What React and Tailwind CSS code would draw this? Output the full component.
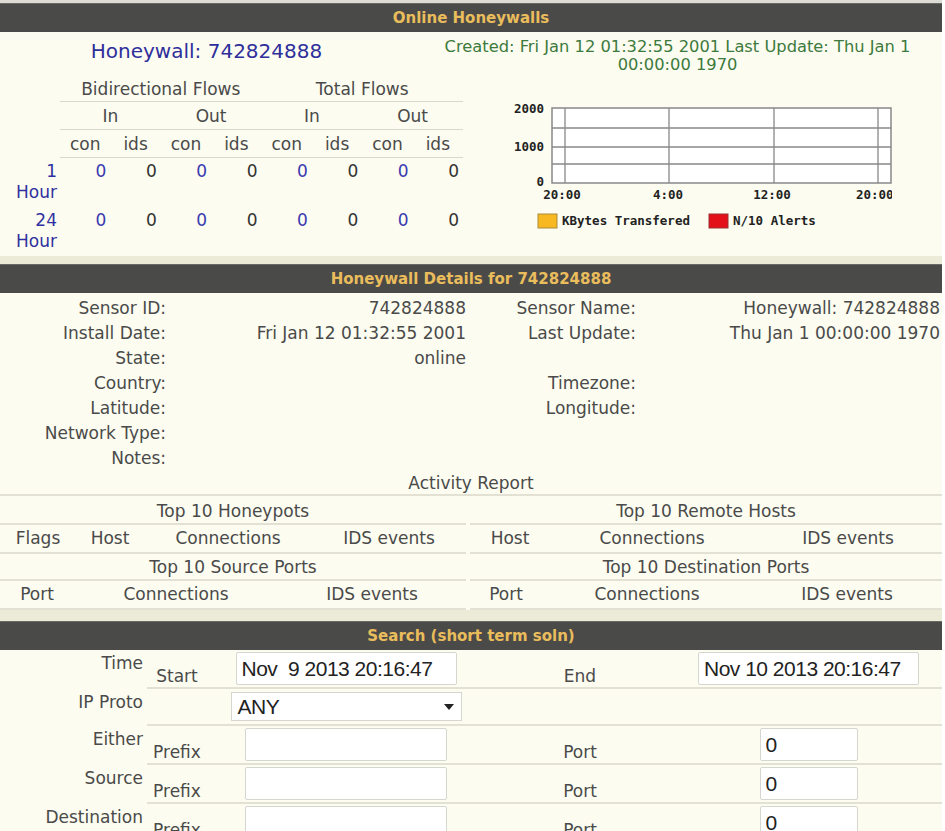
import React from "react";

const font = { fontFamily: '"DejaVu Sans", Verdana, sans-serif' };

function Bar({ title }) {
  return (
    <div className="h-[29px] bg-[#4a4a48] border-t border-[#6a6a66] flex items-center justify-center text-[15px] font-bold text-[#eabd5c]">
      {title}
    </div>
  );
}

function Band({ h = "h-[8px]" }) {
  return <div className={`${h} bg-[#ecebd7]`} />;
}

function Chart() {
  const mono = { fontFamily: '"DejaVu Sans Mono", monospace', fontWeight: 700, fontSize: 12.5 };
  return (
    <svg width="387" height="135" className="block">
      <rect x="47" y="7" width="339" height="75" fill="#fff" stroke="#888" strokeWidth="1.5" />
      {[27, 46, 63].map((y) => (
        <line key={y} x1="47" x2="386" y1={y} y2={y} stroke="#888" strokeWidth="1.3" />
      ))}
      {[60, 164, 269, 373].map((x) => (
        <line key={x} x1={x} x2={x} y1="7" y2="82" stroke="#888" strokeWidth="1.3" />
      ))}
      <g style={mono} fill="#222">
        <text x="39" y="12" textAnchor="end">2000</text>
        <text x="39" y="50" textAnchor="end">1000</text>
        <text x="39" y="85" textAnchor="end">0</text>
        <text x="57" y="98" textAnchor="middle">20:00</text>
        <text x="163" y="98" textAnchor="middle">4:00</text>
        <text x="267" y="98" textAnchor="middle">12:00</text>
        <text x="351" y="98">20:00</text>
        <rect x="33" y="113" width="19" height="14" fill="#f7b821" stroke="#a98a3a" />
        <text x="57" y="124">KBytes Transfered</text>
        <rect x="204" y="113" width="19" height="14" fill="#e3101a" stroke="#9a3030" />
        <text x="228" y="124">N/10 Alerts</text>
      </g>
    </svg>
  );
}

function FlowsTable() {
  const line = "border-b border-[#d9d8cc]";
  const rows = [
    ["1", "Hour"],
    ["24", "Hour"],
  ];
  return (
    <div className="w-[463px] grid grid-cols-[60px_repeat(8,1fr)]">
      <div />
      <div className={`col-span-4 text-center h-[26px] leading-[26px] ${line}`}>Bidirectional Flows</div>
      <div className={`col-span-4 text-center h-[26px] leading-[26px] ${line}`}>Total Flows</div>
      <div />
      {["In", "Out", "In", "Out"].map((t, i) => (
        <div key={i} className={`col-span-2 text-center h-[27px] leading-[27px] ${line}`}>{t}</div>
      ))}
      <div />
      {["con", "ids", "con", "ids", "con", "ids", "con", "ids"].map((t, i) => (
        <div key={i} className={`text-center h-[27px] leading-[27px] ${line}`}>{t}</div>
      ))}
      {rows.map((r, ri) => (
        <React.Fragment key={ri}>
          <div className="text-right pr-[3px] py-[3px] leading-[21px] text-[#3030a0]">
            {r[0]}
            <br />
            {r[1]}
          </div>
          {Array.from({ length: 8 }).map((_, i) => (
            <div
              key={i}
              className={`text-right pr-[4px] py-[3px] leading-[21px] ${i % 2 === 0 ? "text-[#3a3ab0]" : "text-[#333]"}`}
            >
              0
            </div>
          ))}
        </React.Fragment>
      ))}
    </div>
  );
}

function Details() {
  const left = [
    ["Sensor ID:", "742824888", "Sensor Name:", "Honeywall: 742824888"],
    ["Install Date:", "Fri Jan 12 01:32:55 2001", "Last Update:", "Thu Jan 1 00:00:00 1970"],
    ["State:", "online", "", ""],
    ["Country:", "", "Timezone:", ""],
    ["Latitude:", "", "Longitude:", ""],
    ["Network Type:", "", "", ""],
    ["Notes:", "", "", ""],
  ];
  return (
    <div className="pt-[3px]">
      <div className="grid grid-cols-[170px_300px_170px_1fr]">
        {left.map((r, i) => (
          <React.Fragment key={i}>
            <div className="h-[25px] leading-[25px] text-right pr-[4px]">{r[0]}</div>
            <div className="h-[25px] leading-[25px] text-right pr-[4px] whitespace-nowrap">{r[1]}</div>
            <div className="h-[25px] leading-[25px] text-right pr-[4px]">{r[2]}</div>
            <div className="h-[25px] leading-[25px] text-right pr-[2px] whitespace-nowrap">{r[3]}</div>
          </React.Fragment>
        ))}
      </div>
      <div className="h-[25px] leading-[25px] text-center border-b-2 border-[#e2e1d4]">Activity Report</div>
    </div>
  );
}

function TopTable({ title, cols, widths }) {
  return (
    <div>
      <div className="h-[27px] leading-[27px] text-center border-b-2 border-[#e2e1d4]">{title}</div>
      <div className={`grid ${widths} border-b-2 border-[#e2e1d4]`}>
        {cols.map((c) => (
          <div key={c} className="h-[27px] leading-[27px] text-center">{c}</div>
        ))}
      </div>
    </div>
  );
}

function Activity() {
  return (
    <div className="pt-[2px] flex justify-between">
      <div className="w-[466px]">
        <TopTable
          title="Top 10 Honeypots"
          cols={["Flags", "Host", "Connections", "IDS events"]}
          widths="grid-cols-[76px_68px_168px_1fr]"
        />
        <TopTable
          title="Top 10 Source Ports"
          cols={["Port", "Connections", "IDS events"]}
          widths="grid-cols-[74px_204px_1fr]"
        />
      </div>
      <div className="w-[472px]">
        <TopTable
          title="Top 10 Remote Hosts"
          cols={["Host", "Connections", "IDS events"]}
          widths="grid-cols-[80px_204px_1fr]"
        />
        <TopTable
          title="Top 10 Destination Ports"
          cols={["Port", "Connections", "IDS events"]}
          widths="grid-cols-[72px_210px_1fr]"
        />
      </div>
    </div>
  );
}

const inputFont = { fontFamily: '"Liberation Sans", Arial, sans-serif' };

function Field({ value, w, h = "h-[33px]" }) {
  return (
    <div
      className={`${w} ${h} bg-white border border-[#d6d6d0] rounded-[2px] flex items-center px-[5px] text-[21px] tracking-[-0.5px] text-[#222] whitespace-pre`}
      style={inputFont}
    >
      {value}
    </div>
  );
}

function SearchRow({ label, sub, mid, right, midSub, h }) {
  const cell = "border-b-2 border-[#e2e1d4]";
  return (
    <div className={`grid grid-cols-[147px_60px_278px_190px_1fr] ${h}`}>
      <div className="text-right pr-[4px] pt-[3px] leading-[20px]">{label}</div>
      <div className={`${cell} flex items-end justify-center pb-[1px] leading-[20px]`}>{sub}</div>
      <div className={`${cell} flex items-center justify-center`}>{mid}</div>
      <div className={`${cell} flex items-end justify-center pb-[1px] leading-[20px]`}>{midSub}</div>
      <div className={`${cell} flex items-center justify-center`}>{right}</div>
    </div>
  );
}

function Search() {
  return (
    <div>
      <SearchRow
        h="h-[39px]"
        label="Time"
        sub="Start"
        mid={<Field value="Nov  9 2013 20:16:47" w="w-[221px]" />}
        midSub="End"
        right={<Field value="Nov 10 2013 20:16:47" w="w-[221px]" />}
      />
      <SearchRow
        h="h-[37px]"
        label="IP Proto"
        sub=""
        mid={
          <div
            className="w-[231px] h-[29px] bg-white border border-[#d6d6d0] flex items-center justify-between pl-[6px] pr-[7px] text-[21px] tracking-[-0.5px] text-[#222]"
            style={inputFont}
          >
            <span>ANY</span>
            <svg width="10" height="6" viewBox="0 0 10 6" className="block">
              <path d="M0 0h10L5 6z" fill="#222" />
            </svg>
          </div>
        }
        midSub=""
        right={null}
      />
      {["Either", "Source", "Destination"].map((l) => (
        <SearchRow
          key={l}
          h="h-[39px]"
          label={l}
          sub="Prefix"
          mid={<Field value="" w="w-[202px]" />}
          midSub="Port"
          right={<Field value="0" w="w-[98px]" />}
        />
      ))}
    </div>
  );
}

export default function App() {
  return (
    <div className="w-[945px] h-[831px] overflow-hidden bg-white">
      <div className="w-[942px] bg-[#fcfcf0] text-[17px] text-[#4a4a4a]" style={font}>
        <div className="h-[3px] bg-[#dcdcd4]" />
        <Bar title="Online Honeywalls" />
        <div className="flex h-[44px]">
          <div className="w-[413px] text-center pt-[4px] text-[20px] text-[#2f2f9c]">Honeywall: 742824888</div>
          <div className="flex-1 text-center text-[16.3px] leading-[18px] pt-[6px] text-[#3d7a3d]">
            Created: Fri Jan 12 01:32:55 2001 Last Update: Thu Jan 1 00:00:00 1970
          </div>
        </div>
        <div className="flex h-[180px]">
          <FlowsTable />
          <div className="pl-[42px] pt-[25px]">
            <Chart />
          </div>
        </div>
        <Band />
        <Bar title="Honeywall Details for 742824888" />
        <Details />
        <Activity />
        <Band h="h-[11px]" />
        <Bar title="Search (short term soln)" />
        <Search />
      </div>
    </div>
  );
}
